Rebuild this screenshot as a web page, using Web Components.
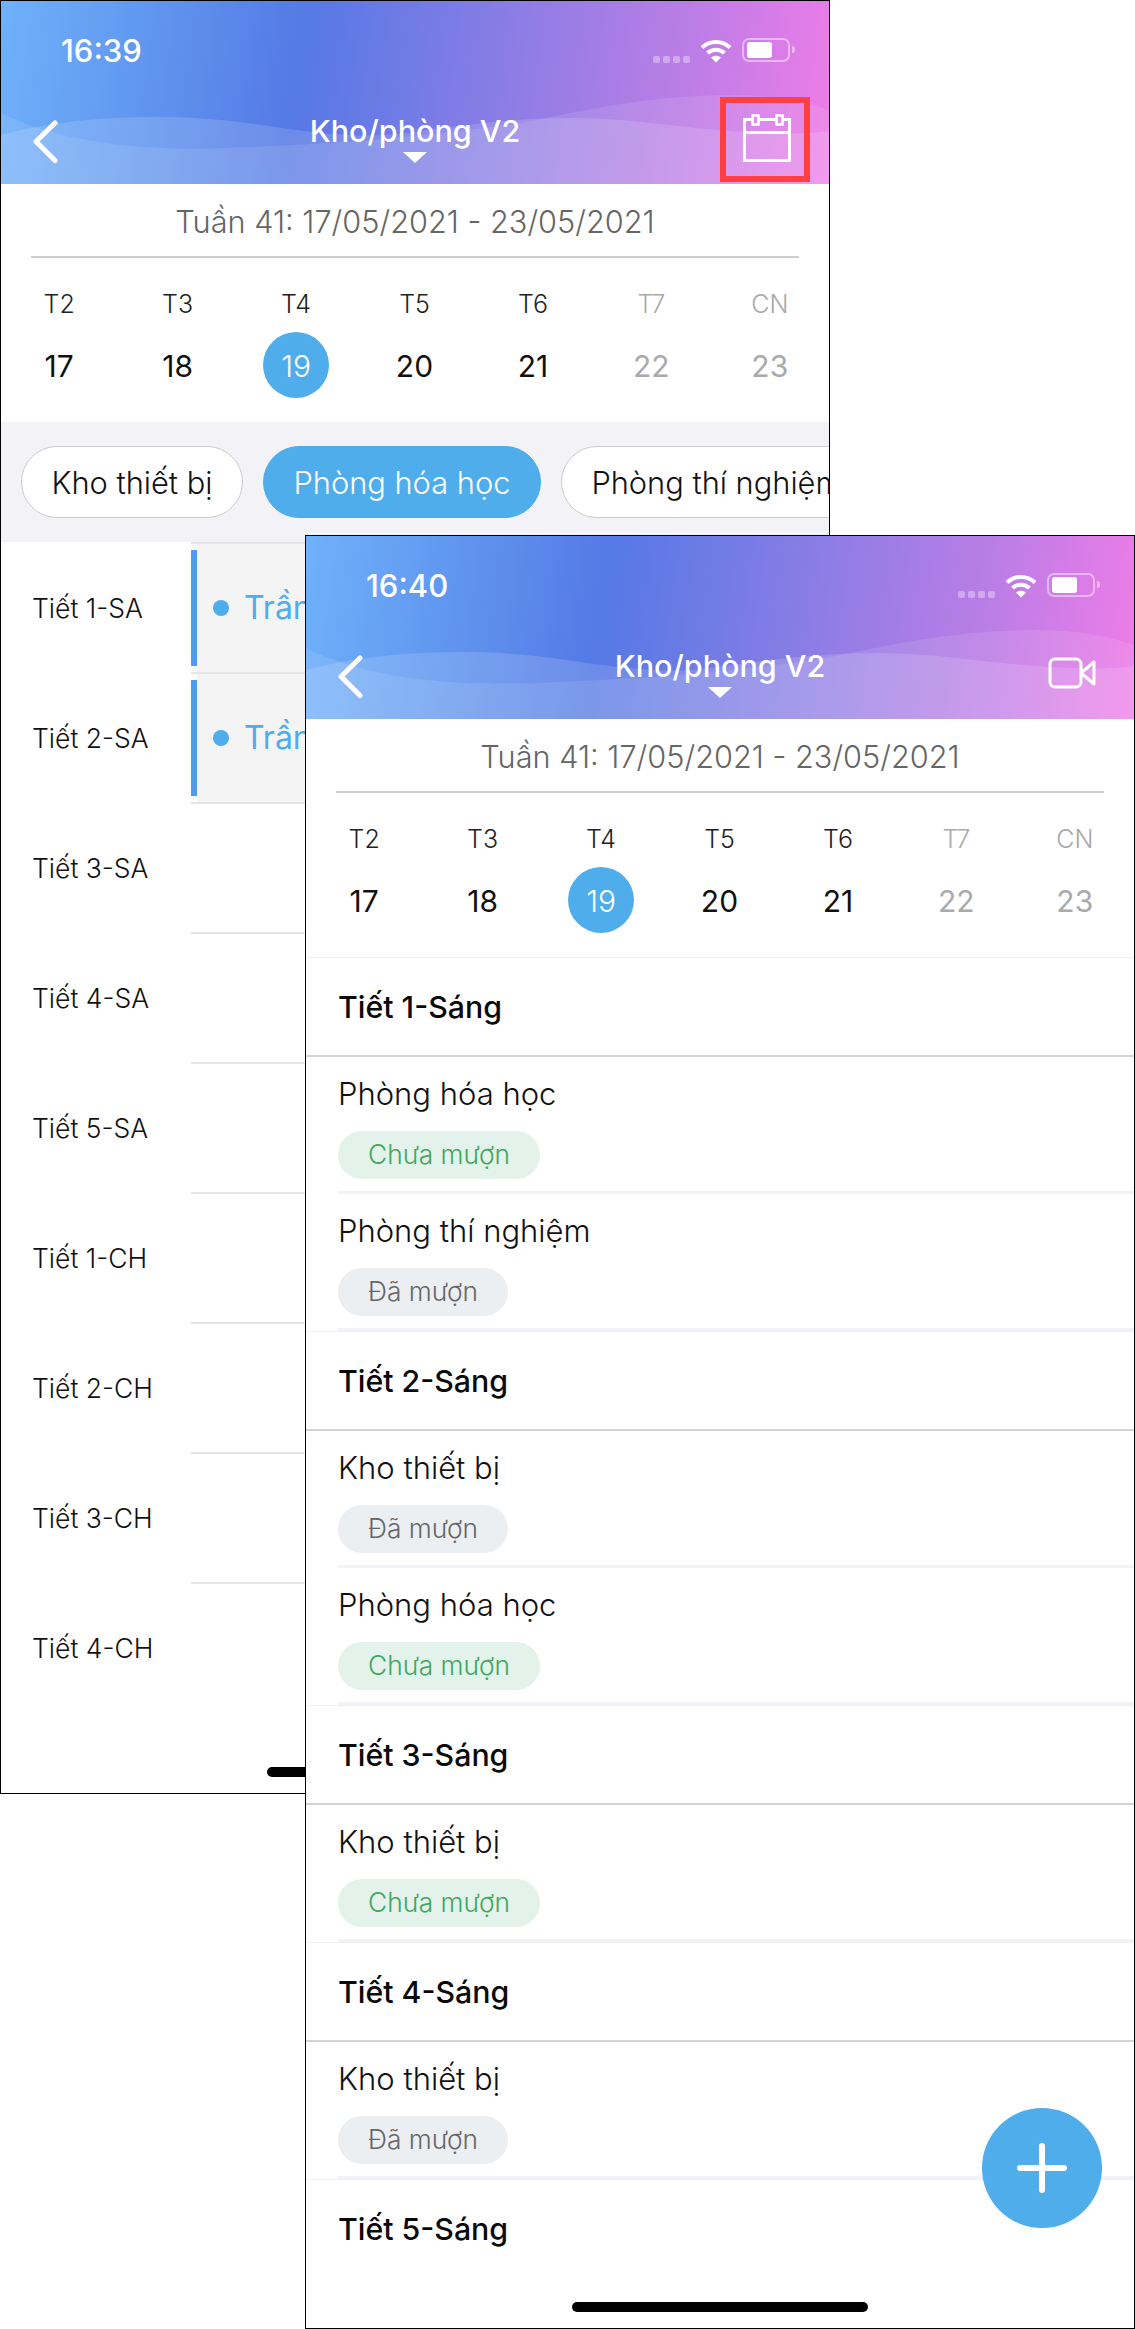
<!DOCTYPE html>
<html lang="vi">
<head>
<meta charset="utf-8">
<title>Kho/phòng V2</title>
<style>
  html, body { margin: 0; background: #fff; }
  body { position: relative; width: 1135px; height: 2329px; overflow: hidden; font-family: Inter, "Noto Sans", sans-serif; }
  phone-frame.back { left: 0; top: 0; width: 830px; height: 1794px; }
  phone-frame.front { left: 305px; top: 535px; width: 830px; height: 1794px; }
</style>
</head>
<body>
<phone-frame class="back">
  <nav-header time="16:39" highlight>
    <svg slot="action" width="48" height="48" viewBox="0 0 48 48" fill="none" stroke="#fff" stroke-width="3">
      <path d="M1.500 5.500h45v41h-45zM1.500 18.500h45"/>
      <rect x="9.500" y="1.500" width="6" height="9" fill="#dd92e6" stroke-width="2.500"/>
      <rect x="33.500" y="1.500" width="6" height="9" fill="#dd92e6" stroke-width="2.500"/>
    </svg>
  </nav-header>
  <week-strip></week-strip>
  <room-pills>
    <room-pill>Kho thiết bị</room-pill>
    <room-pill active>Phòng hóa học</room-pill>
    <room-pill>Phòng thí nghiệm</room-pill>
  </room-pills>
  <period-row label="Tiết 1-SA" teacher="Trần"></period-row>
  <period-row label="Tiết 2-SA" teacher="Trần"></period-row>
  <period-row label="Tiết 3-SA"></period-row>
  <period-row label="Tiết 4-SA"></period-row>
  <period-row label="Tiết 5-SA"></period-row>
  <period-row label="Tiết 1-CH"></period-row>
  <period-row label="Tiết 2-CH"></period-row>
  <period-row label="Tiết 3-CH"></period-row>
  <period-row label="Tiết 4-CH"></period-row>
  <home-bar></home-bar>
</phone-frame>

<phone-frame class="front">
  <nav-header time="16:40">
    <svg slot="action" width="48" height="32" viewBox="0 0 48 32" fill="none" stroke="#fff" stroke-width="3" stroke-linejoin="round">
      <rect x="2" y="2" width="31" height="28" rx="5"/>
      <path d="M33 16 46 5v22z"/>
    </svg>
  </nav-header>
  <week-strip></week-strip>
  <period-section label="Tiết 1-Sáng">
    <room-item name="Phòng hóa học" state="free"></room-item>
    <room-item name="Phòng thí nghiệm" state="used"></room-item>
  </period-section>
  <period-section label="Tiết 2-Sáng">
    <room-item name="Kho thiết bị" state="used"></room-item>
    <room-item name="Phòng hóa học" state="free"></room-item>
  </period-section>
  <period-section label="Tiết 3-Sáng">
    <room-item name="Kho thiết bị" state="free"></room-item>
  </period-section>
  <period-section label="Tiết 4-Sáng">
    <room-item name="Kho thiết bị" state="used"></room-item>
  </period-section>
  <period-section label="Tiết 5-Sáng" last></period-section>
  <add-button></add-button>
  <home-bar></home-bar>
</phone-frame>

<script>
class PhoneFrame extends HTMLElement {
  constructor() {
    super()
    const shadow = this.attachShadow({mode: 'open'})
    shadow.innerHTML = `
      <style>
        :host {
          position: absolute;
          display: block;
          box-sizing: border-box;
          border: 1px solid #000;
          background: #fff;
          overflow: hidden;
          font-family: Inter, "Noto Sans", sans-serif;
        }
      </style>
      <slot></slot>
    `
  }
}
window.customElements.define('phone-frame', PhoneFrame)

class NavHeader extends HTMLElement {
  constructor() {
    super()
    const shadow = this.attachShadow({mode: 'open'})
    shadow.innerHTML = `
      <style>
        :host {
          position: relative;
          display: block;
          height: 183px;
          color: #fff;
          overflow: hidden;
          background: linear-gradient(98deg, #6fb1fa 0%, #5f93ee 20%, #5579e5 36%, #8f7de5 62%, #bd7de6 82%, #f07ce8 100%);
        }
        .waves { position: absolute; left: 0; top: 0; }
        .status {
          position: relative;
          display: flex;
          align-items: center;
          height: 98px;
          padding: 0 39px 0 60px;
        }
        .time { font-size: 31px; font-weight: 500; flex: 1; }
        .signal { display: flex; gap: 3px; margin: 18px 10px 0 0; }
        .signal i { width: 7px; height: 7px; border-radius: 2px; background: rgba(255,255,255,.35); }
        .battery {
          position: relative;
          box-sizing: border-box;
          width: 48px;
          height: 24px;
          margin-left: 10px;
          border: 2px solid rgba(255,255,255,.45);
          border-radius: 7px;
          padding: 2px 3px;
        }
        .battery b { display: block; width: 25px; height: 16px; background: #fff; border-radius: 3px; }
        .battery::after {
          content: '';
          position: absolute;
          right: -7px;
          top: 6px;
          width: 3px;
          height: 7px;
          border-radius: 0 3px 3px 0;
          background: rgba(255,255,255,.45);
        }
        .nav {
          position: relative;
          display: flex;
          justify-content: space-between;
          height: 85px;
          padding: 0 19px 0 31px;
        }
        .back { margin-top: 21px; }
        .center {
          position: absolute;
          left: 0;
          right: 0;
          top: 13px;
          display: flex;
          flex-direction: column;
          align-items: center;
        }
        .title { font-size: 30.500px; font-weight: 500; line-height: 38px; }
        .arrow {
          width: 0;
          height: 0;
          margin-top: 2px;
          border: 12px solid transparent;
          border-top: 11px solid #fff;
          border-bottom: 0;
        }
        .action {
          position: relative;
          box-sizing: border-box;
          width: 90px;
          height: 85px;
          margin-top: -2px;
          display: flex;
          align-items: center;
          justify-content: center;
          padding: 0 0 4px 4px;
        }
        :host([highlight]) .action { border: 6px solid #ff4040; }
      </style>
      <svg class="waves" width="830" height="183" viewBox="0 0 830 183">
        <path fill="#fff" fill-opacity=".1" d="M0 112C60 142 140 150 225 147C340 143 430 135 520 122C590 108 650 94 730 94C770 94 805 100 830 110V183H0Z"/>
        <path fill="#fff" fill-opacity=".14" d="M0 134C50 120 110 115 170 116C270 118 330 145 420 130C500 118 570 112 650 122C720 130 780 136 830 130V183H0Z"/>
      </svg>
      <div class="status">
        <span class="time">${this.getAttribute('time')}</span>
        <span class="signal"><i></i><i></i><i></i><i></i></span>
        <svg width="32" height="25" viewBox="0 0 32 25" fill="none" stroke="#fff" stroke-width="4">
          <path d="M2 9.500C10 2 22 2 30 9.500"/>
          <path d="M7.500 15C12.500 10.500 19.500 10.500 24.500 15"/>
          <path fill="#fff" stroke="none" d="M16 24.500 11 19.500C14 17 18 17 21 19.500Z"/>
        </svg>
        <span class="battery"><b></b></span>
      </div>
      <div class="nav">
        <svg class="back" width="28" height="44" viewBox="0 0 28 44" fill="none" stroke="#fff" stroke-width="5" stroke-linecap="round" stroke-linejoin="round">
          <path d="M23 3 4 21.500l19 19"/>
        </svg>
        <div class="center">
          <span class="title">Kho/phòng V2</span>
          <span class="arrow"></span>
        </div>
        <div class="action"><slot name="action"></slot></div>
      </div>
    `
  }
}
window.customElements.define('nav-header', NavHeader)

class WeekStrip extends HTMLElement {
  days = [
    ['T2', 17], ['T3', 18], ['T4', 19], ['T5', 20], ['T6', 21], ['T7', 22], ['CN', 23]
  ]
  constructor() {
    super()
    const shadow = this.attachShadow({mode: 'open'})
    const cells = this.days.map(([name, date], i) => `
      <div class="day ${i > 4 ? 'off' : ''} ${date === 19 ? 'today' : ''}">
        <span class="name">${name}</span>
        <span class="date">${date}</span>
      </div>
    `).join('')
    shadow.innerHTML = `
      <style>
        :host { display: block; height: 238px; background: #fff; }
        .week {
          margin: 0 30px;
          height: 74px;
          line-height: 76px;
          box-sizing: border-box;
          border-bottom: 2px solid #cfcfcf;
          text-align: center;
          font-size: 30.700px;
          font-weight: 300;
          color: #666;
          white-space: nowrap;
        }
        .grid { display: grid; grid-template-columns: repeat(7, 1fr); padding-top: 18px; margin-left: -1px; }
        .day { display: flex; flex-direction: column; align-items: center; }
        .name { height: 56px; line-height: 57px; font-size: 25px; font-weight: 300; color: #222; }
        .date {
          width: 66px;
          height: 66px;
          line-height: 69px;
          border-radius: 50%;
          text-align: center;
          font-size: 30px;
          font-weight: 400;
          color: #111;
        }
        .off .name, .off .date { color: #aaa; }
        .today .date { background: #4fadeb; color: #fff; font-weight: 300; }
      </style>
      <div class="week">Tuần 41: 17/05/2021 - 23/05/2021</div>
      <div class="grid">${cells}</div>
    `
  }
}
window.customElements.define('week-strip', WeekStrip)

class RoomPills extends HTMLElement {
  constructor() {
    super()
    const shadow = this.attachShadow({mode: 'open'})
    shadow.innerHTML = `
      <style>
        :host {
          display: flex;
          gap: 20px;
          box-sizing: border-box;
          height: 120px;
          padding: 24px 0 0 20px;
          background: #f2f2f7;
          overflow: hidden;
          white-space: nowrap;
        }
      </style>
      <slot></slot>
    `
  }
}
window.customElements.define('room-pills', RoomPills)

class RoomPill extends HTMLElement {
  constructor() {
    super()
    const shadow = this.attachShadow({mode: 'open'})
    shadow.innerHTML = `
      <style>
        :host {
          display: block;
          flex: none;
          box-sizing: border-box;
          height: 72px;
          line-height: 71px;
          padding: 0 29.500px;
          border: 1px solid #ccc;
          border-radius: 36px;
          background: #fff;
          color: #111;
          font-size: 30.800px;
          font-weight: 300;
        }
        :host([active]) { background: #4fadeb; border-color: #4fadeb; color: #fff; }
      </style>
      <slot></slot>
    `
  }
}
window.customElements.define('room-pill', RoomPill)

class PeriodRow extends HTMLElement {
  constructor() {
    super()
    const shadow = this.attachShadow({mode: 'open'})
    const teacher = this.getAttribute('teacher')
    shadow.innerHTML = `
      <style>
        :host { display: flex; height: 130px; }
        .label {
          width: 190px;
          box-sizing: border-box;
          padding: 2px 0 0 31px;
          display: flex;
          align-items: center;
          font-size: 26.500px;
          font-weight: 300;
          color: #111;
        }
        .cell {
          flex: 1;
          box-sizing: border-box;
          border-top: 2px solid #e5e5e5;
          display: flex;
          padding: 6px 0 6px 0;
        }
        .cell.busy { background: linear-gradient(#fff 0 0) left / 6px 100% no-repeat, #f4f4f5; }
        .bar { width: 6px; background: #4f9bf5; }
        .dot { width: 16px; height: 16px; margin: 50px 15px 0 16px; border-radius: 50%; background: #4fadeb; }
        .name { width: 61px; overflow: hidden; margin-top: 37px; line-height: 42px; font-size: 32px; color: #4fadeb; white-space: nowrap; }
      </style>
      <div class="label">${this.getAttribute('label')}</div>
      <div class="cell ${teacher ? 'busy' : ''}">
        ${teacher ? `<span class="bar"></span><span class="dot"></span><span class="name">${teacher}</span>` : ''}
      </div>
    `
  }
}
window.customElements.define('period-row', PeriodRow)

class PeriodSection extends HTMLElement {
  constructor() {
    super()
    const shadow = this.attachShadow({mode: 'open'})
    shadow.innerHTML = `
      <style>
        :host { display: block; }
        .head {
          box-sizing: border-box;
          height: 100px;
          line-height: 99px;
          padding-left: 32px;
          border-top: 1px solid #f0f0f0;
          border-bottom: 2px solid #d4d4d4;
          font-size: 30.300px;
          font-weight: 500;
          color: #0a0a0a;
        }
        :host([last]) .head { border-bottom-color: transparent; }
      </style>
      <div class="head">${this.getAttribute('label')}</div>
      <slot></slot>
    `
  }
}
window.customElements.define('period-section', PeriodSection)

class RoomItem extends HTMLElement {
  constructor() {
    super()
    const shadow = this.attachShadow({mode: 'open'})
    const free = this.getAttribute('state') === 'free'
    shadow.innerHTML = `
      <style>
        :host {
          display: block;
          box-sizing: border-box;
          height: 137px;
          margin-left: 32px;
          padding-top: 16px;
          border-bottom: 3px solid #f2f3f7;
        }
        .name { line-height: 42px; font-size: 31px; font-weight: 300; color: #111; }
        .tag {
          display: inline-block;
          margin-top: 16px;
          height: 48px;
          line-height: 47px;
          padding: 0 30px;
          border-radius: 24px;
          font-size: 26.300px;
          font-weight: 300;
        }
        .free { background: #e3f2ea; color: #3fa75c; }
        .used { background: #eceff2; color: #666; }
      </style>
      <div class="name">${this.getAttribute('name')}</div>
      <span class="tag ${free ? 'free' : 'used'}">${free ? 'Chưa mượn' : 'Đã mượn'}</span>
    `
  }
}
window.customElements.define('room-item', RoomItem)

class AddButton extends HTMLElement {
  constructor() {
    super()
    const shadow = this.attachShadow({mode: 'open'})
    shadow.innerHTML = `
      <style>
        :host {
          position: absolute;
          right: 32px;
          bottom: 100px;
          width: 120px;
          height: 120px;
          border-radius: 50%;
          background: #4fadeb;
          display: flex;
          align-items: center;
          justify-content: center;
        }
      </style>
      <svg width="50" height="50" viewBox="0 0 50 50" stroke="#fff" stroke-width="6" stroke-linecap="round">
        <path d="M25 3v44M3 25h44"/>
      </svg>
    `
  }
}
window.customElements.define('add-button', AddButton)

class HomeBar extends HTMLElement {
  constructor() {
    super()
    const shadow = this.attachShadow({mode: 'open'})
    shadow.innerHTML = `
      <style>
        :host {
          position: absolute;
          left: 50%;
          bottom: 16px;
          width: 296px;
          height: 10px;
          margin-left: -148px;
          border-radius: 5px;
          background: #000;
        }
      </style>
    `
  }
}
window.customElements.define('home-bar', HomeBar)
</script>
</body>
</html>
